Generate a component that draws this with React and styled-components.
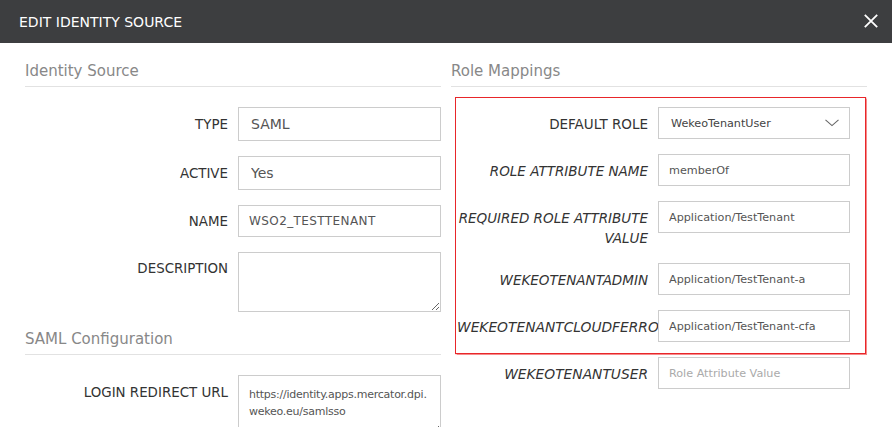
import React from "react";
import styled, { createGlobalStyle } from "styled-components";

const GlobalStyle = createGlobalStyle`
  html, body { margin: 0; padding: 0; background: #fff; }
  body { font-family: "DejaVu Sans", Verdana, sans-serif; }
  * { box-sizing: border-box; }
`;

const Modal = styled.div`
  width: 892px;
  height: 427px;
  overflow: hidden;
  background: #fff;
`;

const Header = styled.header`
  height: 43px;
  background: #3d3e40;
  display: flex;
  align-items: center;
  justify-content: space-between;
  padding: 0 14px 0 19px;
`;

const Title = styled.h1`
  margin: 0;
  font-size: 14px;
  font-weight: normal;
  color: #fff;
`;

const CloseButton = styled.button`
  border: 0;
  background: none;
  padding: 0;
  width: 14px;
  height: 14px;
  display: flex;
  cursor: pointer;
  margin-top: -1px;
`;

const Body = styled.div`
  display: grid;
  grid-template-columns: 416px 416px;
  column-gap: 10px;
  padding: 0 25px;
`;

const Column = styled.section`
  display: flex;
  flex-direction: column;
`;

const SectionTitle = styled.h2`
  margin: ${(p) => p.$top}px 0 0;
  font-size: 15px;
  font-weight: normal;
  line-height: 21px;
  color: #888;
  padding-bottom: 4px;
  border-bottom: 1px solid #e2e2e2;
`;

const FormRows = styled.div`
  margin-top: 20px;
  display: flex;
  flex-direction: column;
  gap: 15px;
`;

const Row = styled.div`
  display: grid;
  grid-template-columns: 203px 203px;
  column-gap: 10px;
`;

const Label = styled.label`
  text-align: right;
  font-size: 13.4px;
  line-height: 20px;
  color: #333;
  padding-top: ${(p) => p.$pad || 7}px;
  white-space: nowrap;
`;

const TextInput = styled.input`
  display: block;
  width: 100%;
  height: ${(p) => p.$h || 32}px;
  border: 1px solid #ccc;
  border-radius: 0;
  padding: 0 ${(p) => p.$px || 10}px;
  font-family: "DejaVu Sans", Verdana, sans-serif;
  font-size: ${(p) => p.$fs || 11.2}px;
  letter-spacing: ${(p) => p.$ls || 0}px;
  color: #555;
  background: #fff;
  outline: none;
  &::placeholder { color: #aaa; }
`;

const TextArea = styled.textarea`
  display: block;
  width: 100%;
  height: ${(p) => p.$h || 60}px;
  border: 1px solid #ccc;
  border-radius: 0;
  padding: ${(p) => p.$pt || 8}px 10px;
  font-family: "DejaVu Sans", Verdana, sans-serif;
  font-size: 11px;
  letter-spacing: -0.25px;
  line-height: 17px;
  color: #555;
  background: #fff;
  outline: none;
  resize: vertical;
  word-break: break-all;
`;

const Highlight = styled.div`
  margin: 10px 0 0 4px;
  width: 411px;
  border: 1px solid #e8262a;
  box-shadow: 0 0 1px 0.5px rgba(240, 60, 60, 0.6);
  padding: 9px 15px 11px 1px;
  display: flex;
  flex-direction: column;
  gap: 15px;
`;

const RoleRow = styled.div`
  display: grid;
  grid-template-columns: 201px 192px;
  margin-left: ${(p) => p.$indent || 0}px;
  margin-top: ${(p) => p.$top || 0}px;
`;

const RoleLabel = styled.label`
  text-align: right;
  font-size: ${(p) => p.$fs || 13.5}px;
  line-height: 20px;
  color: #333;
  font-style: ${(p) => (p.$plain ? "normal" : "italic")};
  padding: 7px 10px 0 0;
  overflow: hidden;
  white-space: ${(p) => (p.$wrap ? "normal" : "nowrap")};
`;

const Select = styled.div`
  height: 32px;
  border: 1px solid #ccc;
  display: flex;
  align-items: center;
  justify-content: space-between;
  padding: 0 10px 0 12px;
  font-size: 11.2px;
  color: #444;
  background: #fff;
`;

const Chevron = () => (
  <svg width="14" height="8" viewBox="0 0 14 8" aria-hidden="true">
    <path d="M0.5 0.8 L7 6.6 L13.5 0.8" fill="none" stroke="#666" strokeWidth="1.1" />
  </svg>
);

const CloseIcon = () => (
  <svg width="14" height="14" viewBox="0 0 14 14" aria-hidden="true">
    <path d="M0.8 0.8 L13.2 13.2 M13.2 0.8 L0.8 13.2" stroke="#fff" strokeWidth="1.8" />
  </svg>
);

const noop = () => {};

export default function App() {
  return (
    <Modal>
      <GlobalStyle />
      <Header>
        <Title>EDIT IDENTITY SOURCE</Title>
        <CloseButton aria-label="Close">
          <CloseIcon />
        </CloseButton>
      </Header>
      <Body>
        <Column>
          <SectionTitle $top={18}>Identity Source</SectionTitle>
          <FormRows>
            <Row>
              <Label $pad={8}>TYPE</Label>
              <TextInput $h={34} $fs={14} $px={12} readOnly value="SAML" />
            </Row>
            <Row>
              <Label $pad={8}>ACTIVE</Label>
              <TextInput $h={34} $fs={14} $px={12} readOnly value="Yes" />
            </Row>
            <Row>
              <Label>NAME</Label>
              <TextInput $h={32} $fs={12} $ls={0.4} value="WSO2_TESTTENANT" onChange={noop} />
            </Row>
            <Row>
              <Label>DESCRIPTION</Label>
              <TextArea $h={60} value="" onChange={noop} />
            </Row>
          </FormRows>
          <SectionTitle $top={17}>SAML Configuration</SectionTitle>
          <FormRows>
            <Row>
              <Label $pad={8}>LOGIN REDIRECT URL</Label>
              <TextArea
                $h={60}
                $pt={10}
                value="https://identity.apps.mercator.dpi.wekeo.eu/samlsso"
                onChange={noop}
              />
            </Row>
          </FormRows>
        </Column>
        <Column>
          <SectionTitle $top={18}>Role Mappings</SectionTitle>
          <Highlight>
            <RoleRow>
              <RoleLabel $plain>DEFAULT ROLE</RoleLabel>
              <Select>
                <span>WekeoTenantUser</span>
                <Chevron />
              </Select>
            </RoleRow>
            <RoleRow>
              <RoleLabel>ROLE ATTRIBUTE NAME</RoleLabel>
              <TextInput value="memberOf" onChange={noop} />
            </RoleRow>
            <RoleRow>
              <RoleLabel $wrap>REQUIRED ROLE ATTRIBUTE VALUE</RoleLabel>
              <TextInput value="Application/TestTenant" onChange={noop} />
            </RoleRow>
            <RoleRow>
              <RoleLabel>WEKEOTENANTADMIN</RoleLabel>
              <TextInput value="Application/TestTenant-a" onChange={noop} />
            </RoleRow>
            <RoleRow>
              <RoleLabel $fs={13.8}>WEKEOTENANTCLOUDFERRO</RoleLabel>
              <TextInput value="Application/TestTenant-cfa" onChange={noop} />
            </RoleRow>
          </Highlight>
          <RoleRow $indent={6} $top={3}>
            <RoleLabel $fs={13.8}>WEKEOTENANTUSER</RoleLabel>
            <TextInput placeholder="Role Attribute Value" value="" onChange={noop} />
          </RoleRow>
        </Column>
      </Body>
    </Modal>
  );
}
